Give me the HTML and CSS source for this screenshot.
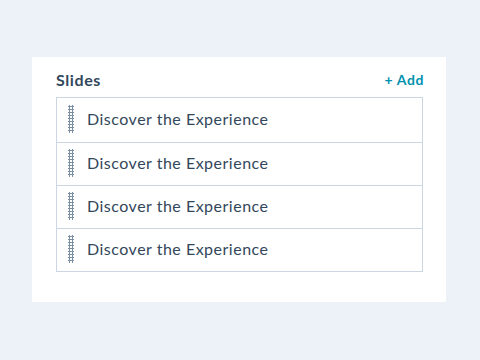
FILE: index.html
```html
<!DOCTYPE html>
<html lang="en">
<head>
    <meta charset="UTF-8">
    <meta name="viewport" content="width=device-width, initial-scale=1.0">
    <title>Slides</title>
    <link rel="stylesheet" href="styles.css">
</head>
<body>
    <div class="card">
        <div class="card-head">
            <h2>Slides</h2>
            <a class="add-link" href="#">+ Add</a>
        </div>
        <ul class="slide-list">
            <li class="slide"><span class="handle"></span>Discover the Experience</li>
            <li class="slide"><span class="handle"></span>Discover the Experience</li>
            <li class="slide"><span class="handle"></span>Discover the Experience</li>
            <li class="slide"><span class="handle"></span>Discover the Experience</li>
        </ul>
    </div>
</body>
</html>
```

FILE: styles.css
```css
body {
    margin: 0;
    background-color: #edf1f8;
    font-family: Lato, "Open Sans", sans-serif;
    color: #33475b;
    padding: 57px 34px 0 32px;
}
.card {
    background: #fff;
    padding: 6px 23px 30px 24px;
    height: 209px;
}
.card-head {
    display: flex;
    justify-content: space-between;
    align-items: center;
    height: 32px;
    padding-bottom: 2px;
}
.card-head h2 {
    margin: 0;
    font-size: 16px;
    font-weight: 700;
    letter-spacing: 0.6px;
}
.add-link {
    color: #0091ae;
    font-size: 14px;
    font-weight: 700;
    letter-spacing: 0.6px;
    text-decoration: none;
    margin-right: -1px;
}
.slide-list {
    list-style: none;
    margin: 0;
    padding: 0;
    border: 1px solid #cbd6e2;
}
.slide {
    display: flex;
    align-items: center;
    box-sizing: border-box;
    height: 43px;
    padding-bottom: 3px;
    border-top: 1px solid #cbd6e2;
    font-size: 16px;
    letter-spacing: 0.5px;
    padding-left: 11px;
}
.slide:first-child {
    border-top: none;
    height: 44px;
}
.handle {
    width: 6px;
    height: 28px;
    margin-right: 13px;
    background-image: radial-gradient(circle, #7a8ea4 1px, transparent 1.3px);
    background-size: 3px 3px;
}
```
